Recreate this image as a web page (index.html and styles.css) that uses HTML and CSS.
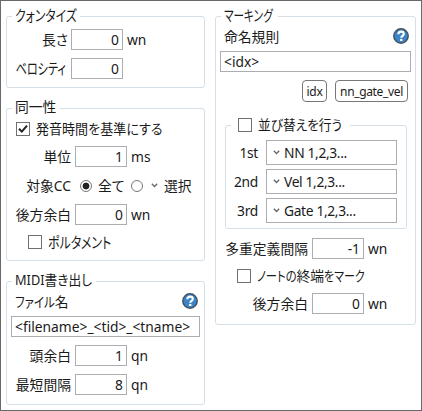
FILE: index.html
```html
<!DOCTYPE html>
<html lang="ja">
<head>
<meta charset="utf-8">
<title>MIDI</title>
<link rel="stylesheet" href="styles.css">
</head>
<body>
<svg width="0" height="0" class="defs">
  <symbol id="help" viewBox="0 0 16 16">
    <circle cx="8" cy="8" r="7.2" fill="#3d85c9" stroke="#46525e" stroke-width="1.5"/>
    <path d="M5.3 6.2C5.3 4.5 6.4 3.6 8 3.6s2.8.9 2.8 2.4c0 1.8-2.5 1.9-2.5 3.8" fill="none" stroke="#fff" stroke-width="2.1"/>
    <rect x="7.1" y="10.9" width="2.3" height="2.1" fill="#fff"/>
  </symbol>
  <symbol id="down" viewBox="0 0 7 5">
    <path d="M.8 .8 3.5 3.5 6.2 .8" fill="none" stroke="#666" stroke-width="1.3"/>
  </symbol>
</svg>
<main class="window">
  <div class="column left">
    <section class="group quantize">
      <h2 class="legend"><span class="kana quant-title">クォンタイズ</span></h2>
      <div class="row"><span class="label">長さ</span><span class="field num">0</span><span class="unit">wn</span></div>
      <div class="row"><span class="label"><span class="kana velocity">ベロシティ</span></span><span class="field num">0</span></div>
    </section>
    <section class="group identity">
      <h2 class="legend"><span>同一性</span></h2>
      <div class="check-row"><span class="box"><svg width="12" height="12" viewBox="0 0 12 12"><path d="M2 5.8 4.8 8.6 10 2.6" fill="none" stroke="#222" stroke-width="2"/></svg></span><span class="kana based">発音時間を基準にする</span></div>
      <div class="row"><span class="label">単位</span><span class="field num">1</span><span class="unit">ms</span></div>
      <div class="row radios"><span class="label cc">対象CC</span><span class="radio on"></span><span class="all">全て</span><span class="radio"></span><svg class="arrow" width="7" height="5"><use href="#down"/></svg><span>選択</span></div>
      <div class="row"><span class="label">後方余白</span><span class="field num">0</span><span class="unit">wn</span></div>
      <div class="check-row indent"><span class="box"></span><span class="kana portamento">ポルタメント</span></div>
    </section>
    <section class="group export">
      <h2 class="legend"><span class="kana export-title">MIDI書き出し</span></h2>
      <div class="heading"><span><span class="kana file">ファイル</span>名</span><svg width="16" height="16"><use href="#help"/></svg></div>
      <div class="field text">&lt;filename&gt;_&lt;tid&gt;_&lt;tname&gt;</div>
      <div class="row"><span class="label">頭余白</span><span class="field num">1</span><span class="unit">qn</span></div>
      <div class="row"><span class="label">最短間隔</span><span class="field num">8</span><span class="unit">qn</span></div>
    </section>
  </div>
  <div class="column right">
    <section class="group marking">
      <h2 class="legend"><span class="kana marking-title">マーキング</span></h2>
      <div class="heading"><span>命名規則</span><svg width="16" height="16"><use href="#help"/></svg></div>
      <div class="field text">&lt;idx&gt;</div>
      <div class="tags"><button class="idx">idx</button><button class="ngv">nn_gate_vel</button></div>
      <section class="group sort">
        <h3 class="legend"><span class="box"></span><span class="kana sort-title">並び替えを行う</span></h3>
        <div class="order"><span class="rank">1st</span><span class="combo"><svg width="7" height="5"><use href="#down"/></svg>NN 1,2,3...</span></div>
        <div class="order"><span class="rank">2nd</span><span class="combo"><svg width="7" height="5"><use href="#down"/></svg>Vel 1,2,3...</span></div>
        <div class="order"><span class="rank">3rd</span><span class="combo"><svg width="7" height="5"><use href="#down"/></svg>Gate 1,2,3...</span></div>
      </section>
      <div class="row"><span class="label">多重定義間隔</span><span class="field num">-1</span><span class="unit">wn</span></div>
      <div class="check-row note"><span class="box"></span><span><span class="kana note-start">ノートの</span>終端<span class="kana note-end">をマーク</span></span></div>
      <div class="row"><span class="label">後方余白</span><span class="field num">0</span><span class="unit">wn</span></div>
    </section>
  </div>
</main>
</body>
</html>
```
FILE: styles.css
```css
* { box-sizing: border-box; }
body { margin: 0; background: #fff; }
.defs { position: absolute; }
.window {
  width: 422px;
  height: 411px;
  border: 1px solid #696969;
  display: flex;
  gap: 10px;
  padding: 15px 5px 0 5px;
  font: 13.8px/20px "Noto Sans", "Noto Sans CJK JP", sans-serif;
  font-feature-settings: "palt";
  color: #1a1a1a;
  white-space: nowrap;
}
.column { display: flex; flex-direction: column; gap: 20px; }
.left { width: 199px; }
.right { width: 201px; }
.group { border: 1px solid #d5dfe5; border-radius: 3px; }
.quantize { height: 72px; }
.identity { height: 153px; }
.export { height: 124px; }
.marking { height: 309px; }
.legend {
  height: 20px;
  margin: -12px 0 1px 5px;
  padding: 0 0 0 3px;
  background: #fff;
  font: inherit;
}
.quantize .legend { width: 68px; margin-bottom: 4px; }
.identity .legend { width: 48px; }
.export .legend { width: 84px; }
.marking .legend { width: 57px; }

/* Condensed kana */
.kana { display: inline-block; transform-origin: 0 50%; }
.quant-title, .velocity, .portamento, .marking-title { font-size: 15.2px; }
.quant-title { transform: scaleX(.78); }
.velocity { transform: scaleX(.73); transform-origin: 100% 50%; margin: 0 2px 0 -20px; }
.based { transform: scaleX(.945); }
.portamento { transform: scaleX(.79); }
.export-title { transform: scaleX(.925); }
.file { transform: scaleX(.83); margin-right: -8px; }
.marking-title { transform: scaleX(.7); }
.sort-title { transform: scaleX(.92); }
.note-start { transform: scaleX(.82); margin-right: -9px; }
.note-end { transform: scaleX(.8); }

.row { display: flex; align-items: center; height: 21px; margin-bottom: 8px; }
.label { width: 68px; text-align: right; padding-right: 4px; flex: none; }
.quantize .label { width: 64px; padding-right: 3px; }
.marking .label { width: 96px; }
.field { border: 1px solid #abadb3; background: #fff; height: 21px; line-height: 19px; }
.num { width: 52px; padding-right: 3px; text-align: right; flex: none; }
.unit { margin-left: 4px; }
.check-row { display: flex; align-items: center; height: 20px; gap: 6px; }
.box { width: 14px; height: 14px; border: 1px solid #707070; display: block; flex: none; }
.box svg { display: block; }
.identity .check-row { margin: 2px 0 7px 9px; }
.identity .check-row.indent { margin: -1px 0 0 21px; }
.radio { width: 12px; height: 12px; border: 1px solid #777; border-radius: 50%; margin-left: 5px; flex: none; }
.radio.on { background: radial-gradient(circle, #222 3px, #fff 3.8px); }
.all { margin-left: 6px; width: 28px; }
.arrow { margin: 0 6px 0 8px; }
.heading { display: flex; justify-content: space-between; height: 20px; padding: 0 6px 0 8px; margin-top: 2px; }
.heading svg { margin-top: 1px; }
.text { padding-left: 3px; margin: 4px 4px 8px; }
.tags { display: flex; justify-content: flex-end; gap: 8px; padding-right: 7px; height: 23px; }
.tags button { font: 12px/19px "Noto Sans", sans-serif; letter-spacing: -.35px; padding: 0; color: #1a1a1a; background: #fff; border: 1px solid #777; border-radius: 4px; height: 22px; }
.idx { width: 25px; }
.ngv { width: 73px; }
.sort { margin: 22px 8px 9px 9px; height: 104px; }
.marking .sort .legend { display: flex; align-items: center; gap: 6px; width: 119px; padding: 0 0 0 7px; margin: -11px 0 5px 5px; }
.order { display: flex; align-items: center; height: 25px; margin-bottom: 4px; }
.rank { width: 40px; padding-right: 8px; text-align: right; letter-spacing: -.3px; }
.combo { width: 131px; height: 25px; border: 1px solid #abadb3; display: flex; align-items: center; padding-left: 6px; gap: 4px; letter-spacing: -.35px; }
.marking .note { margin: -1px 0 7px 21px; }
```
